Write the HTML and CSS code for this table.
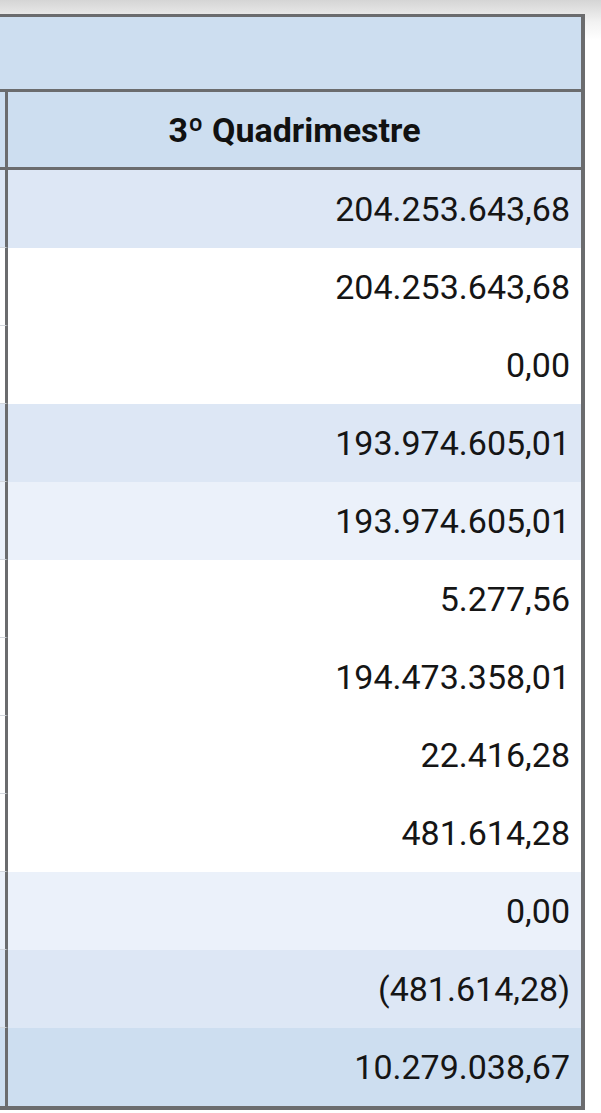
FILE: index.html
```html
<!DOCTYPE html>
<html lang="pt">
<head>
<meta charset="utf-8">
<link rel="stylesheet" href="styles.css">
</head>
<body>
<table class="grid">
  <colgroup><col class="c-side"><col class="c-main"></colgroup>
  <tr class="r-title"><th class="title" colspan="2"></th></tr>
  <tr class="r-head"><th class="side"></th><th class="head">3º Quadrimestre</th></tr>
  <tr class="band-a h77"><td class="side"></td><td class="num">204.253.643,68</td></tr>
  <tr class="band-w"><td class="side"></td><td class="num">204.253.643,68</td></tr>
  <tr class="band-w"><td class="side"></td><td class="num">0,00</td></tr>
  <tr class="band-a"><td class="side"></td><td class="num">193.974.605,01</td></tr>
  <tr class="band-b h77"><td class="side"></td><td class="num">193.974.605,01</td></tr>
  <tr class="band-w"><td class="side"></td><td class="num">5.277,56</td></tr>
  <tr class="band-w"><td class="side"></td><td class="num">194.473.358,01</td></tr>
  <tr class="band-w"><td class="side"></td><td class="num">22.416,28</td></tr>
  <tr class="band-w"><td class="side"></td><td class="num">481.614,28</td></tr>
  <tr class="band-b"><td class="side"></td><td class="num">0,00</td></tr>
  <tr class="band-a"><td class="side"></td><td class="num">(481.614,28)</td></tr>
  <tr class="band-t h76"><td class="side last"></td><td class="num">10.279.038,67</td></tr>
</table>
</body>
</html>
```
FILE: styles.css
```css
html, body {
  margin: 0;
  padding: 0;
}
body {
  background: #fff linear-gradient(#d5d5d5 0px, #f2f2f2 22px, #ffffff 40px) no-repeat;
  background-size: 100% 40px;
  padding-top: 14px;
  font-family: Roboto, "Liberation Sans", sans-serif;
  color: #151515;
}
.grid {
  border-spacing: 0;
  border-collapse: separate;
  width: 585px;
  border-top: 3px solid #6b6c6e;
  border-right: 4px solid #6b6c6e;
  border-bottom: 4px solid #6b6c6e;
  table-layout: fixed;
}
.c-side { width: 8px; }
.c-main { width: 573px; }
.grid td, .grid th {
  padding: 0;
}
.title {
  height: 72px;
  background: #cddef0;
  border-bottom: 3px solid #6b6c6e;
}
.side {
  border-right: 3px solid #6b6c6e;
  border-bottom: 1px solid #d4d8de;
}
.side.last {
  border-bottom: 0;
}
.r-head .side {
  border-bottom: 3px solid #6b6c6e;
  background: #cddef0;
}
.head {
  height: 75px;
  background: #cddef0;
  border-bottom: 3px solid #6b6c6e;
  font-weight: 700;
  font-size: 34px;
  text-align: center;
  color: #111;
  vertical-align: middle;
}
.grid tr:not(.r-title):not(.r-head) > td {
  height: 78px;
}
.grid tr.h77 > td { height: 77px; }
.grid tr.h76 > td { height: 76px; }
.grid tr:not(.r-title):not(.r-head) > td.side {
  height: 77px;
}
.grid tr.h77 > td.side { height: 76px; }
.grid tr.h76 > td.side { height: 76px; }
.num {
  font-size: 34px;
  text-align: right;
  padding-right: 11px !important;
  vertical-align: middle;
  white-space: nowrap;
}
.band-a > td { background: #dde7f5; }
.band-b > td { background: #ebf1fa; }
.band-w > td { background: #ffffff; }
.band-t > td { background: #cddef0; }
```
